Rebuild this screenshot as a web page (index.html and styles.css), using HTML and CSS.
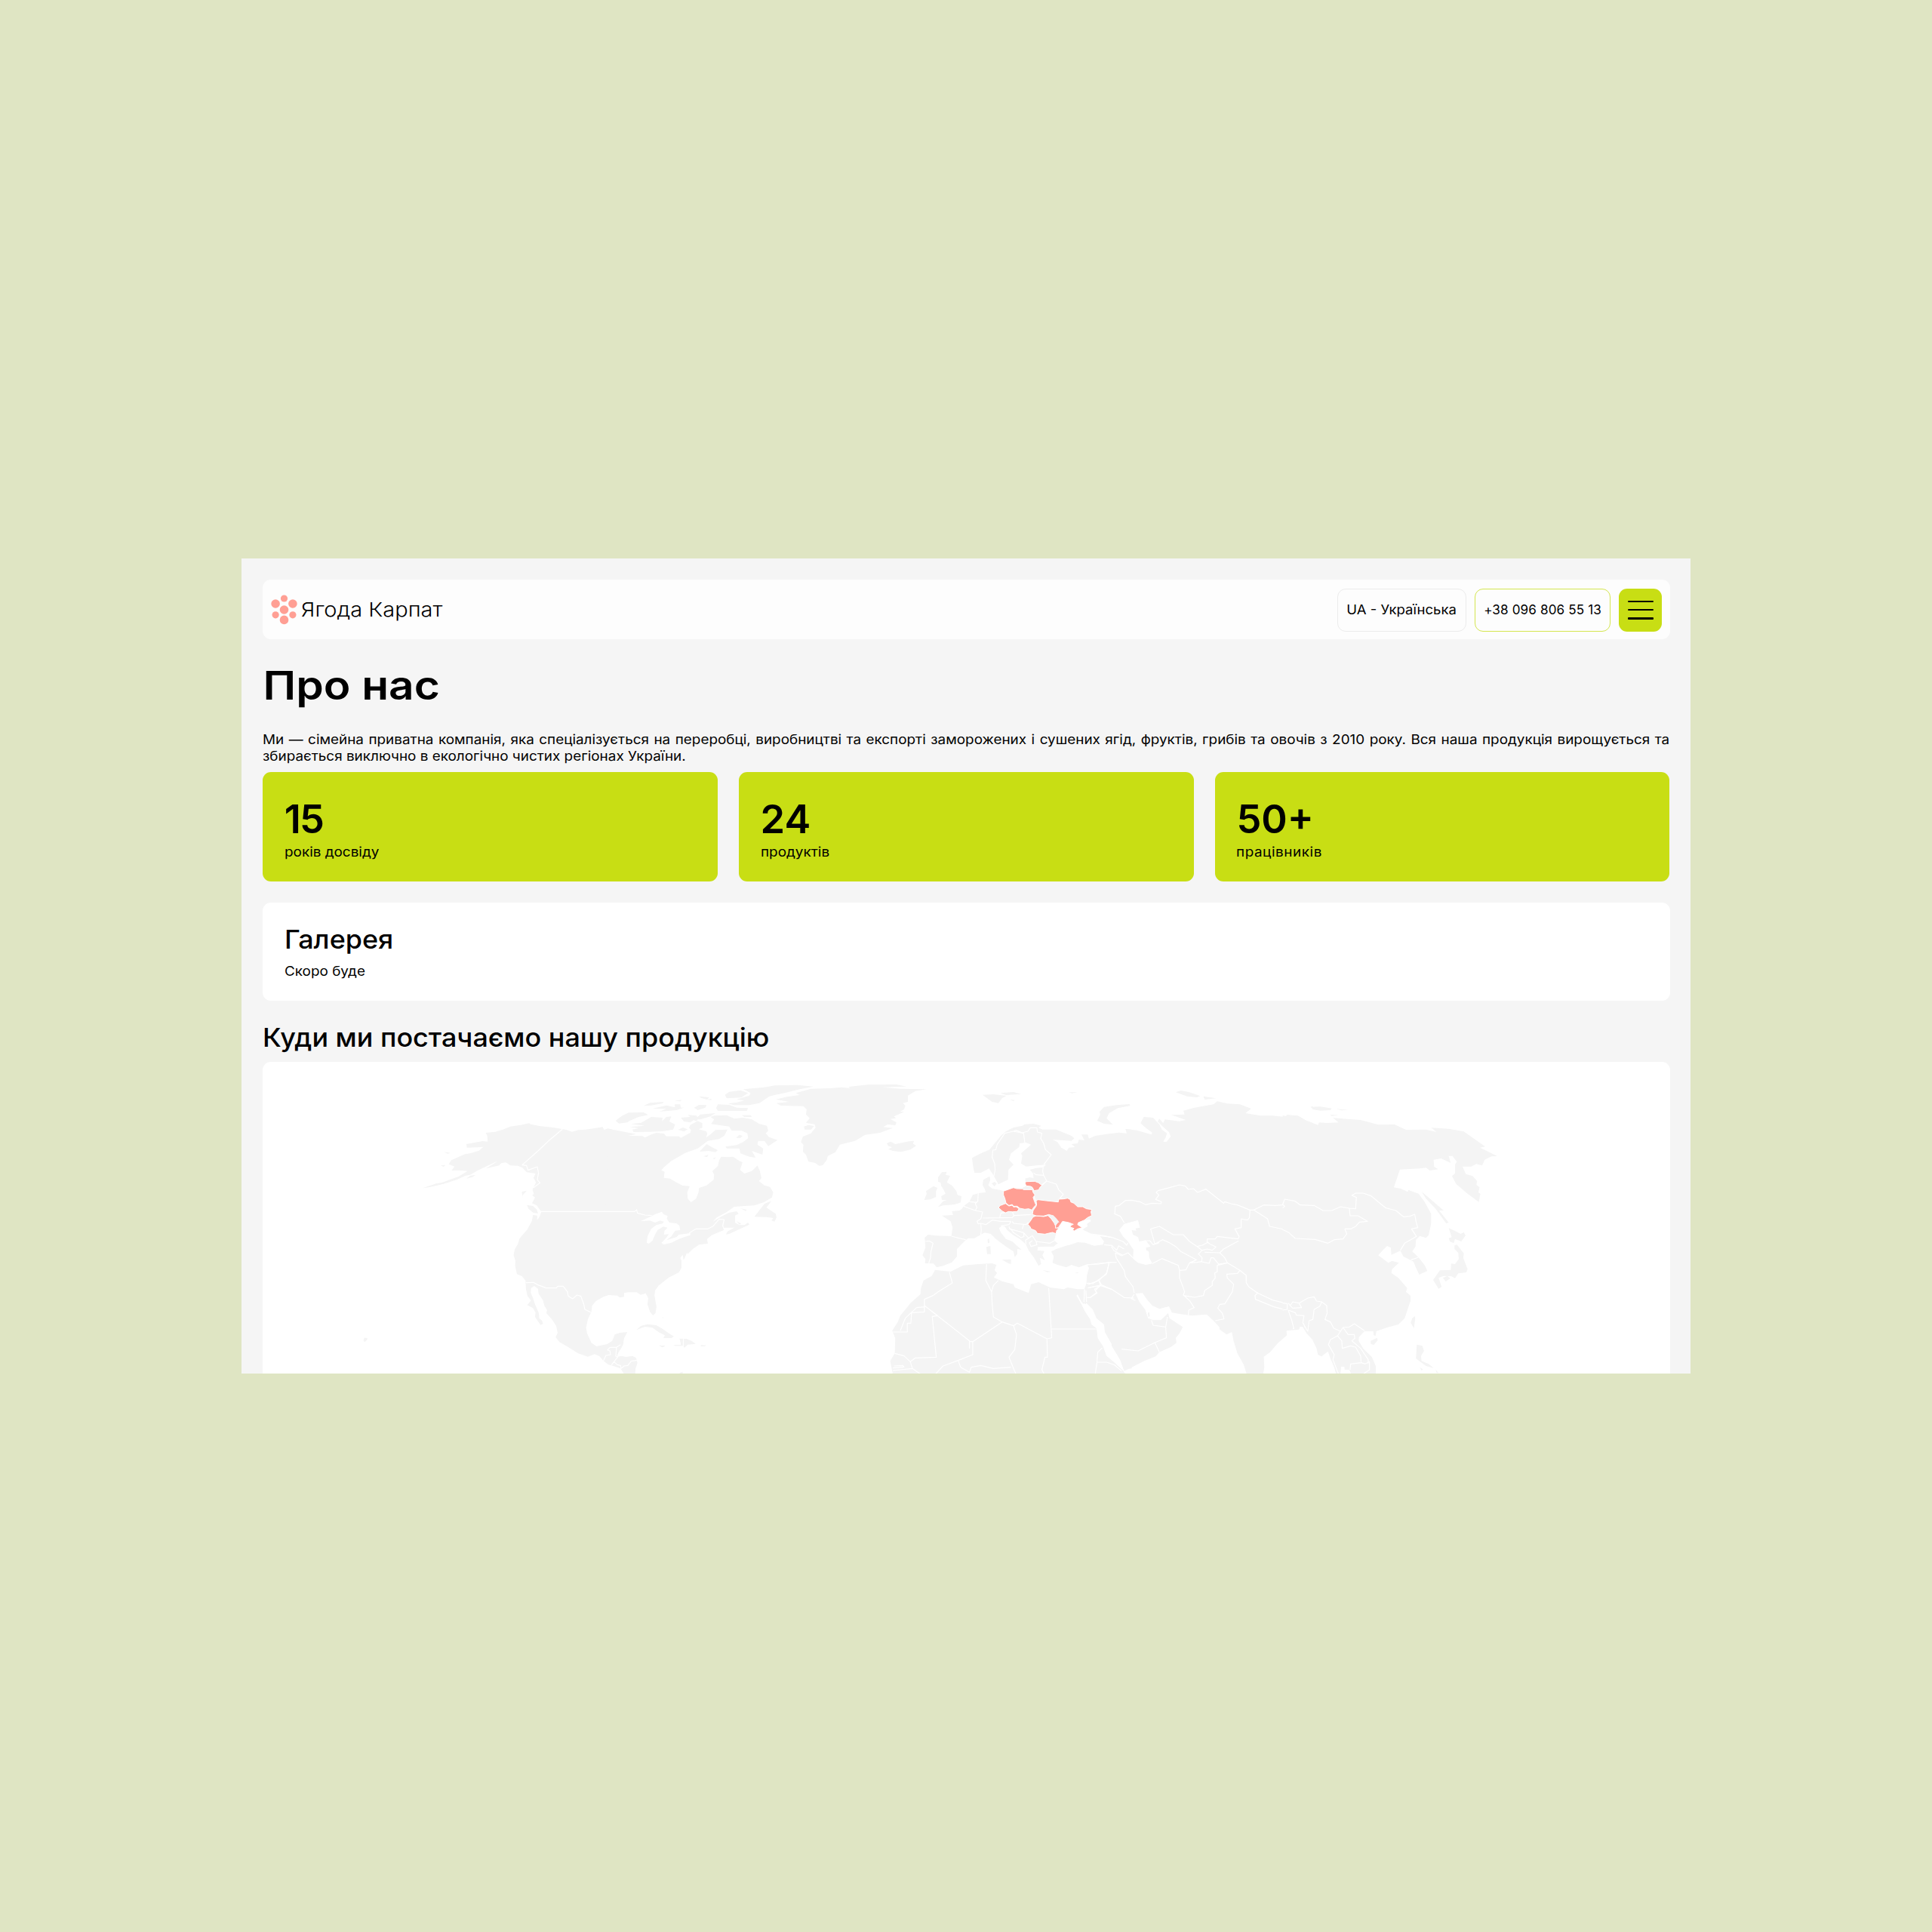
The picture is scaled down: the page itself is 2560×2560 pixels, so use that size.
FILE: index.html
```html
<!DOCTYPE html>
<html lang="uk">
<head>
<meta charset="utf-8">
<title>Про нас</title>
<link rel="stylesheet" href="styles.css">
</head>
<body>
<main class="page">
  <header class="header">
    <a class="brand">
      <svg class="brand-icon" viewBox="0 0 35 40" width="35" height="40">
        <circle cx="17.5" cy="5" r="4.6"/><circle cx="6.1" cy="12" r="5.8"/><circle cx="28.9" cy="12" r="5.8"/>
        <circle cx="17.5" cy="20" r="5.8"/><circle cx="6.1" cy="26.8" r="4.6"/><circle cx="28.9" cy="26.8" r="4.6"/><circle cx="17.5" cy="33.4" r="5.8"/>
      </svg>
      <span class="brand-name">Ягода Карпат</span>
    </a>
    <nav class="actions">
      <a class="pill pill-lang"><span class="pill-text">UA - Українська</span></a>
      <a class="pill pill-phone">+38 096 806 55 13</a>
      <button class="menu" aria-label="Меню"><i></i><i></i><i></i></button>
    </nav>
  </header>
  <h1 class="title">Про нас</h1>
  <p class="intro"><span class="intro-line intro-full">Ми — сімейна приватна компанія, яка спеціалізується на переробці, виробництві та експорті заморожених і сушених ягід, фруктів, грибів та овочів з 2010 року. Вся наша продукція вирощується та</span> <span class="intro-line">збирається виключно в екологічно чистих регіонах України.</span></p>
  <section class="stats">
    <div class="stat"><div class="stat-num stat-num-tight">15</div><div class="stat-label">років досвіду</div></div>
    <div class="stat"><div class="stat-num">24</div><div class="stat-label">продуктів</div></div>
    <div class="stat"><div class="stat-num">50+</div><div class="stat-label stat-label-wide">працівників</div></div>
  </section>
  <section class="gallery">
    <h2 class="subtitle">Галерея</h2>
    <p class="soon">Скоро буде</p>
  </section>
  <h2 class="subtitle supply">Куди ми постачаємо нашу продукцію</h2>
  <section class="map">
    <svg class="world" viewBox="348.4 1407 1864.1 413" width="1864.1" height="413">
      <!-- North America, west -->
      <g transform="translate(540 1400) scale(.33333)">
        <path class="land" d="M820 292L798 286L782 291L777 280L745 285L710 290L680 292L655 299L635 292L615 288L580 282L525 276L490 269L485 265L450 272L410 278L380 290L350 299L312 303L318 315L320 338L300 336L235 348L237 362L280 361L303 359L285 374L250 385L230 388L175 412L165 428L188 437L176 453L205 452L240 455L205 476L140 500L115 505L62 523L90 519L145 506L200 488L230 474L250 470L280 453L300 443L360 415L345 425L313 445L365 433L375 423L392 421L410 433L440 434L458 442L475 460L510 465L502 482L512 500L498 528L503 545L497 552L508 560L496 583L515 592L533 617L526 637L516 650L517 632L500 630L495 655L477 688L447 722L440 745L427 767L423 790L430 812L429 832L436 865L455 872L470 890L472 925L478 952L492 970L477 988L500 1000L510 1018L508 1035L530 1067L540 1062L536 1050L525 1040L523 1020L508 985L500 960L491 940L492 920L505 912L520 923L522 942L540 970L545 990L556 1008L553 1020L575 1045L592 1070L598 1098L590 1115L605 1135L640 1155L680 1180L718 1193L745 1183L765 1192L780 1210L800 1225L820 1230L848 1240L862 1262L906 1262L908 1240L915 1218L910 1198L895 1190L870 1194L850 1190L833 1195L840 1175L850 1160L858 1145L862 1120L875 1095L845 1098L825 1105L815 1130L795 1143L752 1152L732 1138L715 1100L711 1078L718 1045L732 1015L735 990L750 972L780 955L800 948L835 950L845 958L862 955L862 940L880 937L912 937L928 947L948 941L958 960L955 985L965 1015L977 1029L987 1020L991 995L983 950L985 930L1000 910L1040 878L1080 858L1090 840L1090 810L1085 800L1098 785L1100 808L1112 780L1135 765L1145 750Z"/>
        <path class="land" d="M476 590L500 594L515 608L520 624L500 620L482 605ZM456 537L475 533L458 552L458 563ZM235 485L250 474L272 470L260 479ZM147 379L172 383L160 386ZM133 433L152 431L145 438ZM910 1087L930 1070L955 1064L990 1068L1015 1082L1040 1100L1060 1112L1050 1119L1018 1119L1024 1108L1000 1096L975 1078L945 1074ZM1002 1148L1025 1150L1015 1156ZM1058 1146L1088 1146L1085 1130L1082 1121L1110 1122L1130 1130L1147 1142L1115 1145L1102 1157L1096 1150L1066 1150ZM1167 1147L1188 1148L1182 1152L1168 1152ZM1013 1035L1018 1037L1018 1042ZM1083 1256L1095 1253L1095 1262L1083 1262Z"/>
        <path class="line" d="M617 289L560 337L520 375L457 431L474 433L480 452L517 438L522 462L517 490L528 502L502 521M528 616L903 616M472 899L502 898L520 908L552 920L593 920L598 913L620 913L637 935L640 952L657 963L675 948L690 952L702 985L706 1005L730 1017M780 1210L790 1188L808 1185L806 1170L796 1167L806 1156L832 1156L848 1145M832 1156L829 1190L836 1195L812 1226M822 1213L835 1225L848 1228L850 1240L862 1230L877 1228L890 1211L915 1207M1098 1120L1097 1155"/>
      </g>
      <!-- North America, east; Greenland; Iceland -->
      <g transform="translate(800 1400) scale(.33333)">
        <path class="land" d="M20 287L60 295L130 308L98 315L155 316L165 322L190 310L210 303L240 306L250 317L300 317L308 323L345 303L348 292L340 283L345 272L375 256L393 265L393 283L378 289L408 297L413 306L408 322L425 310L445 292L493 290L480 315L460 328L415 335L375 365L325 383L270 415L240 440L230 452L243 458L240 482L265 485L290 500L315 513L343 515L333 540L335 565L348 579L368 565L378 540L380 522L410 512L438 490L440 470L433 455L455 435L460 412L468 398L495 400L515 398L540 415L553 420L543 450L560 465L590 455L612 433L622 455L628 483L618 495L640 512L662 518L675 540L670 560L640 578L600 592L560 594L520 597L490 618L450 640L435 656L470 635L500 620L530 615L537 625L523 632L523 660L540 670L560 670L575 660L580 668L550 682L500 705L487 707L493 695L520 680L478 680L478 690L430 710L412 725L415 743L380 748L355 765L335 785L331 778L318 808L315 785L305 800L0 800Z"/>
        <path class="land" d="M110 268L150 263L190 240L235 243L233 257L250 240L270 238L262 258L285 270L277 290L235 297L180 299L120 300L115 290L140 285L105 280L165 275ZM48 255L75 235L100 223L160 222L178 232L140 240L105 255L95 262L62 266ZM160 196L185 184L240 180L235 186L190 194ZM195 207L250 194L285 202L283 190L305 190L308 203L320 203L290 213L222 219L250 208ZM308 243L345 240L335 232L370 235L373 243L345 262L320 258ZM297 291L315 282L335 289L320 298ZM355 236L380 240L370 257L353 250ZM365 250L385 230L445 225L425 238L385 250ZM360 203L380 192L410 193L405 203L375 213ZM380 158L420 162L412 171L390 165ZM410 171L430 168L428 173ZM282 176L312 172L305 178ZM455 190L500 192L530 203L575 205L570 216L455 216L448 205ZM483 152L500 140L545 134L575 145L548 163L490 166ZM556 130L640 122L680 115L770 113L835 119L780 130L720 145L680 153L660 158L620 185L580 193L520 193L495 187L530 182L560 175L530 170L580 155L585 145ZM550 233L585 233L590 240L560 240ZM382 378L410 348L435 362L455 372L445 380L418 375ZM397 397L418 390L412 399ZM435 405L448 400L440 408Z"/>
        <path class="land" d="M440 235L490 233L520 247L555 243L590 250L620 268L650 275L655 295L645 305L658 320L692 332L655 356L640 335L615 335L612 350L635 365L632 390L590 375L605 402L580 398L545 385L540 365L490 365L485 358L530 352L555 340L575 325L572 305L550 295L510 295L500 278L428 268L440 250L425 240ZM527 323L540 311L553 315L545 323ZM600 637L640 585L668 574L648 600L665 612L685 625L688 640L680 656L668 652L675 642L650 638ZM545 603L570 609L565 614ZM530 655L548 664L540 668ZM220 1148L245 1150L235 1156Z"/>
        <path class="land" d="M685 170L730 160L780 153L765 145L825 128L900 126L945 122L980 125L975 120L1050 112L1165 111L1205 119L1110 122L1180 128L1285 130L1240 137L1210 155L1210 180L1190 185L1200 195L1195 210L1180 218L1195 220L1155 238L1163 245L1140 248L1165 262L1160 273L1130 270L1112 280L1150 284L1100 303L1040 311L1000 335L940 350L922 380L892 395L888 410L872 432L858 434L840 422L815 418L805 390L793 378L795 350L785 340L793 318L825 305L843 283L840 270L805 263L820 245L805 230L808 210L795 197L705 195L688 185L738 180ZM797 278L815 272L838 276L825 290L800 290ZM1126 345L1142 338L1160 348L1215 337L1235 335L1230 346L1243 355L1220 370L1182 379L1150 375L1132 368L1148 360L1133 356Z"/>
        <path class="sea" d="M148 654L180 640L210 625L232 617L240 628L255 633L252 645L262 660L290 663L302 672L305 690L285 692L270 715L250 730L290 718L300 708L345 702L345 710L325 716L300 725L270 740L240 747L230 741L250 720L260 706L240 708L243 692L255 680L238 676L215 690L205 708L195 732L180 744L172 740L175 715L190 685L210 670L235 664L240 656L225 652L205 660L185 652Z"/>
        <path class="line" d="M340 702L368 685L415 685L435 675L460 646L480 648L474 672L480 688M0 616L124 616L132 609L135 622L165 630L192 632"/>
      </g>
      <!-- Europe, Africa, Near East -->
      <g transform="translate(1200 1400) scale(.33333)">
        <path class="land" d="M275 462L270 440L265 403L300 385L335 370L355 345L380 315L400 297L430 282L465 275L475 269L510 267L540 275L530 283L545 290L600 290L660 315L672 325L660 335L585 330L605 340L620 362L642 375L650 362L675 360L660 348L685 345L690 330L712 333L700 310L725 310L730 326L755 315L800 308L850 302L885 307L876 288L900 290L900 1240L868 1243L855 1208L830 1160L793 1095L790 1065L760 1040L745 1005L720 980L725 960L718 985L710 980L718 940L712 925L720 900L722 870L730 840L722 826L690 838L660 828L640 838L605 828L585 820L590 795L580 775L600 765L645 750L610 740L598 748L590 755L555 755L527 757L525 770L553 773L545 790L555 810L535 800L540 825L530 832L512 800L490 770L478 745L455 725L430 710L405 690L395 675L385 673L372 682L380 700L400 725L425 735L462 768L445 765L445 785L435 797L430 775L400 755L360 725L340 705L315 700L300 708L275 722L250 722L240 730L225 745L205 765L205 795L185 818L150 832L125 838L112 823L78 822L80 805L68 790L80 760L77 720L90 708L120 712L183 714L188 680L180 655L145 632L190 630L185 615L215 612L225 605L232 595L255 577L268 550L295 542L320 540L315 525L307 510L310 490L335 476L338 490L330 512L345 525L375 530L392 535L430 522L465 522L480 515L475 500L475 485L495 480L510 483L508 465L495 450L520 443L548 440L560 430L520 433L480 437L460 425L465 395L460 385L500 350L480 342L455 345L452 360L420 385L412 410L430 430L410 450L408 490L385 500L370 508L352 475L333 445L300 462Z"/>
        <path class="land" d="M118 848L180 855L230 830L290 825L345 822L362 828L355 850L365 860L352 878L385 893L430 905L435 918L490 940L500 905L530 897L575 918L630 925L645 918L685 925L712 925L718 938L710 985L700 975L685 945L680 950L700 985L715 1015L735 1045L740 1065L760 1080L765 1120L785 1150L800 1190L830 1215L865 1248L875 1262L-50 1262L-60 1210L-42 1180L-40 1120L-52 1090L-30 1055L-20 1030L5 1000L20 980L60 945L62 920L72 890L105 872Z"/>
        <path class="land" d="M145 460L165 458L160 470L178 474L165 500L185 512L203 535L207 550L223 555L220 580L195 588L150 592L130 598L150 575L165 570L145 570L143 555L160 545L150 525L143 515L140 500L130 498L130 480ZM75 570L85 545L82 535L112 515L128 522L122 535L122 558L100 568ZM307 152L350 150L402 156L385 165L370 185L345 180ZM378 145L430 141L460 149L400 153ZM415 171L435 173L430 177ZM650 142L685 142L662 146ZM343 505L355 498L363 505L355 516ZM322 757L338 753L340 785L325 785ZM327 728L333 722L335 740L328 742ZM384 807L420 806L420 825L405 820ZM545 849L580 855L565 857ZM673 859L690 857L685 861ZM763 255L775 230L772 220L790 200L840 193L890 189L895 195L845 205L810 225L800 245L825 271L790 267Z"/>
        <path class="sea" d="M592 732L600 700L603 685L612 683L615 672L625 655L650 660L665 662L655 675L668 683L672 693L700 683L685 672L684 662L705 655L715 650L735 647L738 654L722 665L725 675L715 680L705 688L740 705L775 715L790 735L785 748L750 752L715 740L685 738L650 750L625 752L605 742Z"/>
        <path class="line" d="M352 475L357 450L355 425L345 400L348 372L360 370L365 350L395 305L430 297L470 305L475 342M430 297L440 293L465 303L487 297L497 283L523 283L525 300L543 305L538 325L550 345L557 370L580 390L550 430M548 440L546 455L550 472L520 470L510 463M550 472L562 495L543 510M475 485L475 500M562 495L600 507L610 530L628 548L615 562L628 566M519 575L508 548M543 512L562 495M290 543L288 575L278 585L285 600L278 612L232 595M255 577L285 580M278 612L307 618L300 645L285 655L290 665L300 663L320 668L345 650L380 655L420 655M300 663L302 690L300 708M307 642L375 641L380 622L398 620M375 641L425 640L432 632L425 617M432 632L500 628M425 655L430 663L480 668L488 660M380 673L412 668L420 655M412 675L415 685L470 700L472 715L460 720L430 700L418 683M465 685L470 668M470 700L490 722L478 730L480 745M490 722L505 712L520 735L523 748L500 755L493 740L505 732M520 735L575 742L592 732M183 714L240 728M80 735L95 733L110 742L102 775L100 800L93 822M738 705L790 712L845 725L870 745L900 755M790 748L830 752L845 770L870 745M820 755L825 770L835 785L862 790M835 785L840 810L870 845L875 870L900 895M722 828L770 822L805 820L840 815M810 820L800 860L770 890L730 905L720 900M770 890L775 910L725 920M775 910L820 925L865 958L900 960M775 910L755 930L762 940L735 958L722 958M718 930L720 975M712 925L710 975M175 857L187 900L130 935L110 950L76 965L76 1015L25 1018L22 1060L8 1060L8 1095L-50 1095M-20 1090L0 1040L45 998L76 995M76 990L255 1130L255 1160M76 990L128 1030L107 1033L123 1195L40 1198L20 1213L-5 1190L-42 1180M20 1213L28 1240L-50 1248M-45 1230L-10 1228L-5 1234L-50 1238M28 1240L60 1262M120 1262L150 1230L210 1208L268 1185L268 1133L255 1133M268 1133L385 1055L350 1035L345 980L343 935L320 890L323 825M343 935L350 910L370 890M385 1055L430 1070L445 1060L563 1122L582 1118L570 920M582 1083L760 1083M563 1122L565 1195L555 1195L543 1245L552 1262M430 1070L442 1105L435 1165L412 1195L430 1240L440 1262M210 1208L220 1235L255 1255L262 1235L300 1228L350 1240L420 1235M755 1262L762 1215L800 1215L830 1225L860 1250M762 1215L765 1175L783 1158M900 1163L860 1163"/>
        <path class="mark" d="M390 535L430 521L442 525L465 526L470 529L505 529L508 540L515 550L508 560L513 575L519 590L510 600L503 610L490 605L475 607L455 603L445 595L430 595L425 588L412 592L400 582L396 565L390 550ZM370 600L378 592L398 584L412 594L425 591L430 598L440 597L452 605L445 616L425 617L410 616L398 621L385 614ZM475 500L482 497L515 496L530 502L543 512L535 520L530 530L512 533L505 520L498 516L480 514ZM487 667L500 650L507 638L520 633L550 636L567 632L580 645L592 662L600 680L612 683L602 690L599 704L585 699L555 706L525 703L518 692L500 685L495 675Z"/>
        <path class="mark" d="M520 572L528 569L560 573L608 578L610 567L628 566L645 563L655 568L658 578L670 583L685 597L705 597L720 605L741 608L738 618L741 632L725 640L712 650L700 655L688 660L685 668L692 673L703 680L685 685L672 693L665 690L670 683L655 678L660 670L668 667L650 660L635 657L625 655L618 665L608 680L597 682L597 672L605 660L598 645L585 632L570 628L550 634L520 633L505 628L508 612L520 595L522 588Z"/>
        <path class="land" d="M577 630L588 631L600 643L612 658L604 662L597 672L590 655Z"/>
      </g>
      <!-- Asia, west -->
      <g transform="translate(1440 1400) scale(.33333)">
        <path class="land" d="M100 306L160 305L155 288L200 293L258 310L262 303L235 283L215 265L228 240L265 243L290 270L300 290L320 305L315 322L305 338L318 339L335 318L328 300L305 280L283 258L290 247L305 265L312 250L368 257L395 252L337 232L390 230L385 215L430 203L505 190L520 178L560 187L610 190L655 207L632 225L690 235L740 235L790 240L800 232L850 240L870 255L900 265L900 1122L880 1105L870 1080L850 1070L845 1085L795 1090L797 1108L760 1140L730 1175L705 1193L707 1235L703 1262L637 1262L625 1225L600 1180L585 1130L578 1095L557 1105L530 1085L528 1075L505 1050L478 1025L420 1030L375 1024L340 1018L328 993L290 1003L262 990L240 965L223 940L195 942L210 975L233 1005L245 1040L265 1048L295 1048L325 1020L330 1040L345 1050L383 1075L370 1100L355 1118L358 1138L335 1155L290 1175L275 1192L230 1210L180 1235L150 1250L135 1207L100 1150Z"/>
        <path class="land" d="M355 142L375 135L410 142L452 157L440 162L400 158ZM465 158L515 166L470 171ZM890 200L900 198L900 206ZM244 1020L250 1015L252 1033L246 1035Z"/>
        <path class="sea" d="M130 690L150 665L205 650L213 680L195 683L198 692L180 690L185 708L205 718L210 735L235 730L255 755L237 760L238 770L248 775L250 800L262 823L235 828L205 820L185 803L187 768L165 735L145 715Z"/>
        <path class="line" d="M150 660L135 635L112 625L115 595L130 592L155 572L180 571L215 578L235 589L260 583L297 585L298 577L275 568L288 550L277 540L285 533L330 521L370 510L393 515L405 528L425 525L442 540L475 527L545 583L550 577L575 585L600 590L650 610L648 640L640 650L615 645L615 680L590 685L607 715L603 725L520 715L512 725L480 725L480 740L460 750L440 755L410 735L385 708L345 708L290 675L255 685L272 745L302 728L330 740L355 755L375 775L437 808L410 820L395 848L370 850L365 830L300 803L262 823M237 732L252 732L265 748L290 740M440 755L460 770L445 785L460 800L458 815L440 818L410 820M460 770L480 765L500 770L515 757L490 745L478 735M470 778L530 780L545 765L605 733M530 780L550 800L560 820L525 825L505 800L495 800L488 822L455 815M560 820L520 830L520 855L510 860L512 880L500 895L500 910L470 930L465 950L430 957L385 950M370 850L370 880L385 920L390 935L385 948L410 970L428 998L407 1008L405 1028M512 1050L547 1043L540 1020L522 1000L530 985L550 983L580 935L585 905L560 880L558 865L600 862L610 850L560 820M610 850L635 870L635 898L645 915L680 940L740 968L800 983L798 1008L745 995L672 965L670 950L682 938M800 983L808 990L828 977L850 980L855 997L815 1000L808 990M855 980L870 965L900 958M803 1008L812 1015L830 1020L832 1028L865 1030L865 1045L852 1065L860 1063M803 1008L812 1040L823 1083M650 610L665 610L705 590L750 592L780 590L788 567L830 575L850 590L900 595M665 610L720 645L728 675L800 690L828 722L900 725M35 710L100 718L145 735L160 750L165 740M100 750L120 770L128 752L150 765M100 755L108 770L125 780L145 790M115 780L118 800L150 850L155 875L185 915L190 940M115 780L140 792L165 780L185 800M0 828L50 825L90 818L120 818M90 820L80 865L25 903L5 900M50 890L60 908L12 918M60 908L100 925L150 958L190 960M60 908L32 925L40 938L15 958M190 945L178 962L195 970M258 1048L265 1068L315 1075L322 1035M315 1075L318 1118L272 1137L205 1170L140 1163M272 1137L290 1175"/>
      </g>
      <!-- Asia, east -->
      <g transform="translate(1700 1400) scale(.33333)">
        <path class="land" d="M0 234L15 237L15 232L60 235L90 252L140 272L145 262L175 264L222 262L200 244L310 252L380 271L445 270L490 291L570 290L612 300L590 283L660 287L720 298L805 358L785 362L853 396L830 397L803 410L793 433L770 427L750 437L715 437L728 467L755 475L773 495L770 510L783 520L778 540L786 545L780 578L735 545L690 507L673 475L685 465L685 430L692 418L675 395L660 395L668 423L630 405L600 410L602 438L618 448L585 453L570 442L545 445L466 449L442 520L470 525L497 538L500 530L540 545L563 575L590 625L590 665L580 710L570 721L545 713L530 728L528 755L515 775L540 798L565 830L575 852L543 867L530 840L520 815L500 805L480 795L468 772L432 788L430 760L415 753L400 768L380 790L400 805L420 820L435 812L462 820L435 845L432 860L460 880L495 920L490 935L508 950L508 972L485 1040L460 1065L415 1077L372 1092L370 1110L362 1108L360 1092L325 1092L303 1115L302 1130L320 1160L355 1195L370 1230L371 1262L272 1262L265 1245L247 1245L245 1233L232 1233L230 1262L212 1262L205 1235L190 1200L180 1172L155 1192L140 1185L135 1160L118 1125L95 1100L80 1075L60 1072L15 1090L0 1118Z"/>
        <path class="land" d="M552 537L580 560L640 612L622 612L660 660L650 663L608 605L570 565ZM660 682L685 693L708 705L720 698L727 712L710 735L685 725L680 742L665 735L660 722L672 718ZM683 750L693 748L720 782L718 800L735 845L730 858L698 862L685 881L670 873L640 872L620 880L632 915L620 923L598 888L625 850L668 848L670 823L685 825L700 805L698 780L683 765ZM637 880L655 872L666 882L648 894ZM525 1032L527 1040L522 1080L509 1058L515 1040ZM350 1130L375 1118L378 1128L362 1146L350 1142ZM533 1145L555 1150L562 1170L550 1190L552 1210L580 1222L600 1238L570 1230L545 1212L530 1200ZM545 1235L557 1243L553 1249ZM608 1245L620 1258L612 1258ZM112 200L150 199L195 206L190 213L150 215L120 210ZM210 208L260 212L235 214ZM188 231L222 233L195 236Z"/>
        <path class="line" d="M0 602L8 595L0 588L8 567L50 575L70 590L125 592L160 612L195 612L230 597L265 603L290 605L293 560L275 552L290 543L320 543L350 553L410 602L450 612L480 637L505 635L525 627L530 655L537 680L512 685L532 715L485 742L468 770M265 603L268 633L300 633L337 655L305 658L290 675L272 685L247 685L255 705L240 725L205 728L180 742L130 727L50 723L25 700L0 688M510 808L540 798M0 980L18 982L18 1005L0 1008M22 980L30 990L40 975L65 980L75 998L40 1000L28 988M65 980L100 960L125 955L135 972L155 975L148 992L125 1005L120 1045L105 1050L100 1092L85 1070M22 1008L50 1018L55 1028L85 1030L80 1058L95 1085M22 1008L35 1045L45 1083M155 975L175 990L177 1020L168 1045L190 1055L203 1080L230 1092L240 1077L265 1075L285 1062L325 1090M230 1092L218 1110L190 1125L182 1145L205 1185L200 1205L222 1262M240 1077L260 1105L285 1105L287 1120L275 1130L310 1160L340 1205L340 1220M218 1110L235 1130L237 1160L270 1150L290 1155L310 1190L312 1217L270 1222L268 1245M312 1217L328 1222L345 1213L345 1245L320 1262"/>
      </g>
      <path class="land" d="M483 1772.5L487 1773L487 1775L484 1778L482 1777Z"/>
    </svg>
  </section>
</main>
</body>
</html>
```
FILE: styles.css
```css
* { box-sizing: border-box; margin: 0; padding: 0; }
body { background: #dfe5c3; height: 2560px; display: flex; align-items: center; justify-content: center; font-family: Inter, "Open Sans", sans-serif; font-size: 17.1px; line-height: 21.67px; color: #000; }
.page { width: 1920px; height: 1080px; overflow: hidden; background: #f5f5f5; padding: 28.4px 27.5px 0 28.4px; }
.header { height: 78.7px; display: flex; align-items: center; justify-content: space-between; padding: 0 10.5px 0 11px; background: #fdfdfd; border-radius: 11px; }
.brand { display: flex; align-items: center; }
.brand-icon { fill: #ff9f94; }
.brand-name { font-size: 26px; margin-left: 4.5px; font-weight: 350; transform: scaleX(1.115); transform-origin: left; }
.actions { display: flex; gap: 10.7px; margin-top: 1px; }
.pill { height: 57px; display: flex; align-items: center; justify-content: center; border: 1.2px solid #ececec; border-radius: 11px; font-weight: 370; }
.pill-lang { width: 171px; }
.pill-text { transform: scaleX(1.085); }
.pill-phone { width: 180.6px; border-color: #d4e64f; letter-spacing: .12px; }
.menu { width: 57px; height: 57px; border: 0; border-radius: 11px; background: #c8de14; display: flex; flex-direction: column; align-items: center; justify-content: center; gap: 9px; }
.menu i { width: 34px; height: 2.2px; border-radius: 1px; background: #000; }
.title { width: fit-content; font-size: 52.3px; font-weight: 600; line-height: 65px; margin-top: 29.4px; padding-left: .5px; transform: scaleX(1.12); transform-origin: left; }
.intro { margin-top: 27.4px; width: 1687px; font-weight: 370; transform: scaleX(1.105); transform-origin: left; }
.intro-line { display: block; }
.intro-full { text-align: justify; text-align-last: justify; }
.stats { display: grid; grid-template-columns: repeat(3, 1fr); gap: 28.4px; margin-top: 11px; }
.stat { height: 144.4px; padding: 30px 28.4px 0; border-radius: 11px; background: #c8de14; }
.stat-num { font-size: 52.3px; font-weight: 600; line-height: 65px; }
.stat-num-tight { letter-spacing: -2px; }
.stat-label, .soon { width: fit-content; font-weight: 370; transform: scaleX(1.105); transform-origin: left; }
.stat-label-wide { letter-spacing: .5px; }
.gallery { margin-top: 28.4px; height: 130.4px; padding: 27.4px 28.4px 0; border-radius: 11px; background: #fff; }
.subtitle { width: fit-content; font-size: 34.4px; font-weight: 450; line-height: 43.3px; transform: scaleX(1.045); transform-origin: left; }
.soon { margin-top: 9.6px; }
.supply { margin-top: 27px; }
.map { margin-top: 10.1px; height: 800px; background: #fff; border-radius: 11px; }
.world { display: block; }
.land { fill: #f4f4f4; }
.sea { fill: #fff; }
.line { fill: none; stroke: #fff; stroke-width: 3.6; stroke-linejoin: round; }
.mark { fill: #ff9f94; stroke: #fff; stroke-width: 3; stroke-linejoin: round; }
```
